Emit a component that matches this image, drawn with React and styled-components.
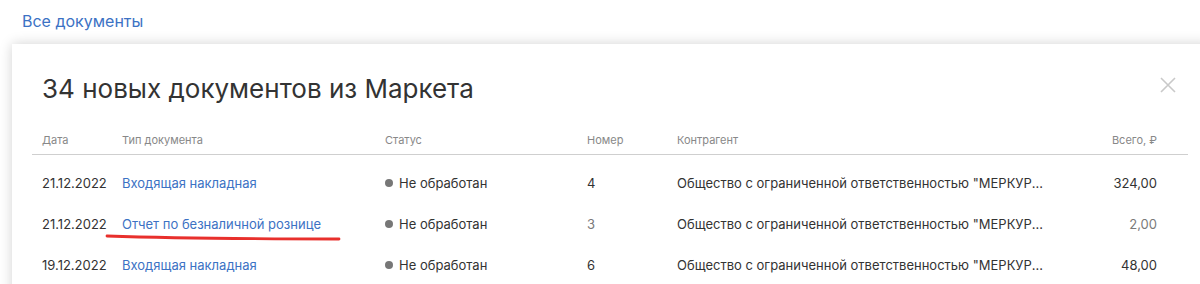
import styled, { createGlobalStyle } from "styled-components";

const GlobalStyle = createGlobalStyle`
    body {
        margin: 0;
        background: #fff;
        font-family: Inter, "Noto Sans", sans-serif;
        color: #333;
    }
`;

const Page = styled.div`
    padding: 11px 0 0 0;
    width: 1212px;
    height: 284px;
    overflow: hidden;
`;

const BackLink = styled.a`
    display: inline-block;
    margin-left: 22px;
    font-size: 16px;
    line-height: 20px;
    color: #3c72c4;
    text-decoration: none;
    cursor: pointer;
`;

const Card = styled.div`
    position: relative;
    margin: 13px 0 0 12px;
    width: 1200px;
    height: 260px;
    background: #fff;
    box-shadow: 0 0 12px rgba(0, 0, 0, 0.18);
    padding: 29px 24px 0 20px;
    box-sizing: border-box;
`;

const Title = styled.h2`
    margin: 0 0 21px 10px;
    font-size: 26px;
    line-height: 32px;
    font-weight: 400;
    color: #333;
`;

const CloseButton = styled.button`
    position: absolute;
    top: 33px;
    right: 36px;
    width: 16px;
    height: 16px;
    padding: 0;
    border: none;
    background: none;
    cursor: pointer;
`;

const Grid = styled.div`
    display: grid;
    grid-template-columns: 80px 263px 202px 90px 1fr 130px;
`;

const HeadRow = styled(Grid)`
    height: 28px;
    align-items: center;
    border-bottom: 1px solid #cfcfcf;
`;

const Body = styled.div`
    padding-top: 7px;
`;

const Row = styled(Grid)`
    height: 41px;
    align-items: center;
`;

const HeadCell = styled.div`
    padding: 0 10px;
    font-size: 11px;
    color: #888;
    text-align: ${(p) => (p.$right ? "right" : "left")};
    padding-right: ${(p) => (p.$right ? "31px" : "10px")};
`;

const Cell = styled.div`
    position: relative;
    padding: 0 10px;
    font-size: 13px;
    line-height: 16px;
    color: ${(p) => (p.$muted ? "#7a7a7a" : "#333")};
    text-align: ${(p) => (p.$right ? "right" : "left")};
    padding-right: ${(p) => (p.$right ? "31px" : "10px")};
    white-space: nowrap;
    overflow: ${(p) => (p.$clip ? "hidden" : "visible")};
`;

const DocLink = styled.a`
    color: #3c72c4;
    text-decoration: none;
    cursor: pointer;
`;

const Status = styled.span`
    display: inline-flex;
    align-items: center;
    gap: 6px;
    &::before {
        content: "";
        width: 8px;
        height: 8px;
        border-radius: 50%;
        background: #777;
    }
`;

const Counterparty = styled.div`
    max-width: 374px;
    overflow: hidden;
    text-overflow: ellipsis;
    white-space: nowrap;
`;

const Scribble = styled.svg`
    position: absolute;
    left: -7px;
    top: 17px;
    pointer-events: none;
`;

const rows = [
    { date: "21.12.2022", type: "Входящая накладная", num: "4", sum: "324,00" },
    { date: "21.12.2022", type: "Отчет по безналичной рознице", num: "3", sum: "2,00", muted: true, marked: true },
    { date: "19.12.2022", type: "Входящая накладная", num: "6", sum: "48,00" },
];

const company = 'Общество с ограниченной ответственностью "МЕРКУРИЙ"';

export default function App() {
    return (
        <>
            <GlobalStyle />
            <Page>
                <BackLink>Все документы</BackLink>
                <Card>
                    <Title>34 новых документов из Маркета</Title>
                    <CloseButton aria-label="Закрыть">
                        <svg width="16" height="16" viewBox="0 0 16 16">
                            <path d="M1 1L15 15M15 1L1 15" stroke="#c9c9c9" strokeWidth="1.6" />
                        </svg>
                    </CloseButton>
                    <HeadRow>
                        <HeadCell>Дата</HeadCell>
                        <HeadCell>Тип документа</HeadCell>
                        <HeadCell>Статус</HeadCell>
                        <HeadCell>Номер</HeadCell>
                        <HeadCell>Контрагент</HeadCell>
                        <HeadCell $right>Всего, ₽</HeadCell>
                    </HeadRow>
                    <Body>
                        {rows.map((r, i) => (
                            <Row key={i}>
                                <Cell>{r.date}</Cell>
                                <Cell>
                                    <DocLink>{r.type}</DocLink>
                                    {r.marked && (
                                        <Scribble width="240" height="10" viewBox="0 0 240 10">
                                            <path
                                                d="M2 3 C 60 5, 150 6, 234 6"
                                                stroke="#e8302c"
                                                strokeWidth="2.8"
                                                strokeLinecap="round"
                                                fill="none"
                                            />
                                        </Scribble>
                                    )}
                                </Cell>
                                <Cell>
                                    <Status>Не обработан</Status>
                                </Cell>
                                <Cell $muted={r.muted}>{r.num}</Cell>
                                <Cell $clip>
                                    <Counterparty>{company}</Counterparty>
                                </Cell>
                                <Cell $right $muted={r.muted}>{r.sum}</Cell>
                            </Row>
                        ))}
                    </Body>
                </Card>
            </Page>
        </>
    );
}
